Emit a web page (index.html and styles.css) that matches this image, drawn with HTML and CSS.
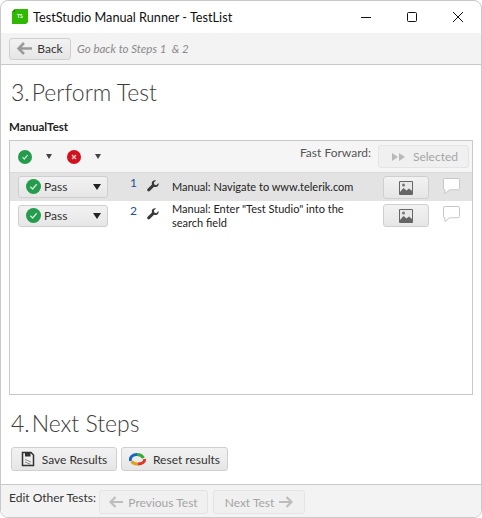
FILE: index.html
```html
<!DOCTYPE html>
<html>
  <head>
    <meta charset="utf-8">
    <title>TestStudio Manual Runner - TestList</title>
    <link rel="stylesheet" href="styles.css">
  </head>

  <body>
    <div class="window">
      <div class="titlebar">
        <svg class="logo" width="17" height="17" viewBox="0 0 17 17">
          <path d="M4 1H17V14L15 16H1V4Z" fill="#2fb900"/>
          <path d="M4 1V4H1Z" fill="#1c7a00"/>
          <text x="6" y="10" class="logo-text">TS</text>
        </svg>
        <span class="title">TestStudio Manual Runner - TestList</span>
        <div class="caption">
          <svg width="46" height="16" viewBox="0 0 46 16"><path d="M18 8.500H28" stroke="#111" fill="none"/></svg>
          <svg width="46" height="16" viewBox="0 0 46 16"><rect x="18.500" y="3.500" width="9" height="9" rx="1" stroke="#111" fill="none"/></svg>
          <svg width="46" height="16" viewBox="0 0 46 16"><path d="M18 3L28 13M28 3L18 13" stroke="#111" fill="none"/></svg>
        </div>
      </div>

      <div class="toolbar">
        <button class="btn back-btn">
          <svg width="15" height="13" viewBox="0 0 15 13"><path d="M7 1L1.500 6.500L7 12M2 6.500H15" stroke="#9a9a9a" stroke-width="2.500" fill="none"/></svg>
          Back
        </button>
        <span class="hint">Go back to Steps 1 &nbsp;&amp; 2</span>
      </div>

      <div class="content">
        <h1 class="step-title"><span class="step-num">3.</span>Perform Test</h1>
        <div class="test-name">ManualTest</div>

        <div class="panel">
          <div class="panel-bar">
            <svg class="status" width="14" height="14" viewBox="0 0 14 14"><circle cx="7" cy="7" r="7" fill="#259b4c"/><path d="M4.500 7.200L6.300 9L9.600 5.200" stroke="#cfe8d6" stroke-width="1.200" fill="none"/></svg>
            <span class="caret small first"></span>
            <svg class="status" width="14" height="14" viewBox="0 0 14 14"><circle cx="7" cy="7" r="7" fill="#d4101c"/><path d="M5 5L9 9M9 5L5 9" stroke="#f6d5d5" stroke-width="1.300"/></svg>
            <span class="caret small"></span>
            <span class="ff-label">Fast Forward:</span>
            <button class="btn selected-btn" disabled>
              <svg width="14" height="8" viewBox="0 0 14 8"><path d="M0 0L6 4L0 8ZM7 0L13 4L7 8Z" fill="#b9b9b9"/></svg>
              Selected
            </button>
          </div>

          <div class="step-row active">
            <button class="btn pass-select">
              <svg width="15" height="15" viewBox="0 0 14 14"><circle cx="7" cy="7" r="7" fill="#259b4c"/><path d="M4 7.200L6.200 9.300L10 4.900" stroke="#cfe8d6" stroke-width="1.300" fill="none"/></svg>
              <span class="pass-text">Pass</span>
              <span class="caret"></span>
            </button>
            <span class="step-num-cell">1</span>
            <svg class="wrench" width="12" height="12" viewBox="0 0 14 14"><path d="M13.500 3.500L10.800 6L8.500 5.300L8 3L10.500 .5C8.500 0 6.200 1 5.700 3C5.500 3.800 5.500 4.600 5.800 5.300L.8 10.300C0 11.100 0 12 .7 12.800C1.500 13.600 2.500 13.500 3.200 12.800L8.200 8C10.500 8.800 12.800 7.500 13.500 5.500Z" fill="#3a3a3a"/></svg>
            <span class="step-text">Manual: Navigate to www.telerik.com</span>
            <button class="btn image-btn">
              <svg width="14" height="14" viewBox="0 0 14 14"><path d="M.5 .5H13.500V13.500H.5Z" fill="#e8e8e8" stroke="#666"/><path d="M1 11L4.500 7L7.500 9.500L10 7.500L13 10V13H1Z" fill="#666"/><circle cx="4.500" cy="4" r="1.500" fill="#777"/></svg>
            </button>
            <svg class="comment" width="17" height="17" viewBox="0 0 18 18"><path d="M2 .5H16C17 .5 17.500 1 17.500 2V11C17.500 12 17 12.500 16 12.500H7L2 16.500V12.500C1 12.500 .5 12 .5 11V2C.5 1 1 .5 2 .5Z" fill="#fff" stroke="#c4c4c4"/></svg>
          </div>

          <div class="step-row second">
            <button class="btn pass-select">
              <svg width="15" height="15" viewBox="0 0 14 14"><circle cx="7" cy="7" r="7" fill="#259b4c"/><path d="M4 7.200L6.200 9.300L10 4.900" stroke="#cfe8d6" stroke-width="1.300" fill="none"/></svg>
              <span class="pass-text">Pass</span>
              <span class="caret"></span>
            </button>
            <span class="step-num-cell">2</span>
            <svg class="wrench" width="12" height="12" viewBox="0 0 14 14"><path d="M13.500 3.500L10.800 6L8.500 5.300L8 3L10.500 .5C8.500 0 6.200 1 5.700 3C5.500 3.800 5.500 4.600 5.800 5.300L.8 10.300C0 11.100 0 12 .7 12.800C1.500 13.600 2.500 13.500 3.200 12.800L8.200 8C10.500 8.800 12.800 7.500 13.500 5.500Z" fill="#3a3a3a"/></svg>
            <span class="step-text">Manual: Enter "Test Studio" into the search field</span>
            <button class="btn image-btn">
              <svg width="14" height="14" viewBox="0 0 14 14"><path d="M.5 .5H13.500V13.500H.5Z" fill="#e8e8e8" stroke="#666"/><path d="M1 11L4.500 7L7.500 9.500L10 7.500L13 10V13H1Z" fill="#666"/><circle cx="4.500" cy="4" r="1.500" fill="#777"/></svg>
            </button>
            <svg class="comment" width="17" height="17" viewBox="0 0 18 18"><path d="M2 .5H16C17 .5 17.500 1 17.500 2V11C17.500 12 17 12.500 16 12.500H7L2 16.500V12.500C1 12.500 .5 12 .5 11V2C.5 1 1 .5 2 .5Z" fill="#fff" stroke="#c4c4c4"/></svg>
          </div>
        </div>

        <h1 class="step-title next"><span class="step-num">4.</span>Next Steps</h1>
        <div class="actions">
          <button class="btn action-btn save">
            <svg width="14" height="16" viewBox="0 0 14 16"><path d="M1.500 1.500H10L12.500 4V14.500H1.500Z" fill="#eee" stroke="#333" stroke-width="1.500"/><path d="M4 1.500H9.500V5.500H4Z" fill="#333"/><path d="M4 8.500L10 11M4 11L10 13.500" stroke="#888"/></svg>
            Save Results
          </button>
          <button class="btn action-btn reset">
            <svg width="17" height="15" viewBox="0 0 17 15">
              <path d="M1.500 9C.5 5 4 2.500 8 2.500" stroke="#1565c8" stroke-width="3" fill="none"/>
              <path d="M8 2.500C11 2.500 13 3.500 14.500 6" stroke="#3aa935" stroke-width="3" fill="none"/>
              <path d="M15.500 7C16 10 13 12 9 12" stroke="#d9382b" stroke-width="3" fill="none"/>
              <path d="M9 12C6 12 4 11.500 2.500 9.500" stroke="#e0a020" stroke-width="3" fill="none"/>
            </svg>
            Reset results
          </button>
        </div>
      </div>

      <div class="footer">
        <span class="footer-label">Edit Other Tests:</span>
        <button class="btn nav-btn prev" disabled>
          <svg width="14" height="12" viewBox="0 0 14 12"><path d="M6.500 1L1.500 6L6.500 11M2 6H14" stroke="#bdbdbd" stroke-width="2.200" fill="none"/></svg>
          Previous Test
        </button>
        <button class="btn nav-btn next-test" disabled>
          Next Test
          <svg width="14" height="12" viewBox="0 0 14 12"><path d="M7.500 1L12.500 6L7.500 11M12 6H0" stroke="#bdbdbd" stroke-width="2.200" fill="none"/></svg>
        </button>
      </div>
    </div>
  </body>
</html>
```

FILE: styles.css
```css
html,
body {
  margin: 0;
  height: 100%;
  background-color: #fff;
}

body {
  font-family: Lato, "Open Sans", sans-serif;
  font-size: 12px;
  color: #222;
}

.window {
  display: flex;
  flex-direction: column;
  box-sizing: border-box;
  width: 482px;
  height: 518px;
  background-color: #fff;
  border: 1px solid #c9c9c9;
  border-radius: 8px;
  overflow: hidden;
}

.titlebar {
  display: flex;
  align-items: center;
  height: 32px;
  padding-left: 10px;
}

.logo {
  margin-top: -2px;
}

.logo-text {
  font-size: 5px;
  font-weight: 700;
  fill: #fff;
}

.title {
  margin-left: 5px;
  font-size: 12.700px;
  color: #111;
}

.caption {
  display: flex;
  margin-left: auto;
}

.toolbar {
  display: flex;
  align-items: center;
  gap: 6px;
  height: 31px;
  padding-left: 8px;
  background-color: #f3f3f3;
  border-bottom: 1px solid #c9c9c9;
}

.btn {
  display: flex;
  align-items: center;
  justify-content: center;
  gap: 5px;
  box-sizing: border-box;
  padding: 0;
  font-family: inherit;
  font-size: 12px;
  color: #333;
  background: linear-gradient(to bottom, #f2f2f2, #e6e6e6);
  border: 1px solid #cfcfcf;
  border-radius: 3px;
}

.btn:disabled {
  color: #a5a5a5;
  background: #f0f0f0;
  border-color: #e4e4e4;
}

.back-btn {
  width: 62px;
  height: 22px;
}

.hint {
  font-size: 11.500px;
  font-style: italic;
  color: #8a8a8a;
}

.content {
  flex: 1;
  padding: 0 8px;
}

.step-title {
  display: flex;
  margin: 10px 0 0 2px;
  font-size: 23px;
  line-height: 34px;
  font-weight: 300;
  color: #3c3c3c;
}

.step-num {
  margin-right: 2px;
}

.test-name {
  margin-top: 9px;
  height: 18px;
  line-height: 18px;
  font-size: 11.500px;
  font-weight: 700;
}

.panel {
  box-sizing: border-box;
  height: 255px;
  margin-top: 4px;
  border: 1px solid #c9c9c9;
}

.panel-bar {
  display: flex;
  align-items: center;
  height: 31px;
  padding: 0 3px 0 8px;
  background-color: #f5f5f5;
  border-bottom: 1px solid #d8d8d8;
}

.caret {
  width: 0;
  height: 0;
  margin-left: auto;
  margin-right: 6px;
  border-left: 4.500px solid transparent;
  border-right: 4.500px solid transparent;
  border-top: 6px solid #222;
}

.caret.small {
  margin: 0 0 0 14px;
  border-left-width: 3.500px;
  border-right-width: 3.500px;
  border-top-width: 5px;
  border-top-color: #444;
}

.caret.first {
  margin-right: 15px;
}

.ff-label {
  margin: -8px 7px 0 auto;
  color: #555;
}

.selected-btn {
  width: 91px;
  height: 23px;
  gap: 7px;
  padding-left: 3px;
}

.step-row {
  display: flex;
  align-items: flex-start;
  height: 28px;
  padding-top: 3px;
  box-sizing: border-box;
}

.step-row.active {
  background-color: #e3e3e3;
}

.pass-select {
  justify-content: flex-start;
  flex-shrink: 0;
  width: 90px;
  height: 22px;
  margin-left: 8px;
  padding: 0 0 1px 7px;
  gap: 3px;
}

.second .pass-select {
  margin-top: 1px;
}

.step-num-cell {
  width: 8px;
  margin-left: 22px;
  font-size: 12px;
  line-height: 14px;
  color: #1b4f93;
}

.wrench {
  flex-shrink: 0;
  margin: 4px 0 0 9px;
}

.step-text {
  box-sizing: border-box;
  width: 211px;
  margin-left: 13px;
  padding-top: 4px;
  font-size: 11px;
  line-height: 14px;
  color: #222;
}

.second .step-text {
  padding: 0 30px 0 0;
  margin-top: -2px;
}

.image-btn {
  width: 46px;
  height: 23px;
  flex-shrink: 0;
}

.comment {
  flex-shrink: 0;
  margin: 2px 0 0 14px;
}

.step-title.next {
  margin-top: 11px;
}

.actions {
  display: flex;
  gap: 4px;
  margin: 7px 0 0 2px;
}

.action-btn {
  height: 24px;
  gap: 7px;
}

.save {
  width: 106px;
}

.reset {
  width: 107px;
}

.footer {
  display: flex;
  align-items: flex-start;
  height: 33px;
  box-sizing: border-box;
  padding: 5px 0 0 8px;
  background-color: #f3f3f3;
  border-top: 1px solid #c9c9c9;
}

.footer-label {
  width: 90px;
  flex-shrink: 0;
  color: #333;
}

.nav-btn {
  height: 24px;
}

.prev {
  width: 109px;
}

.next-test {
  width: 92px;
  margin-left: 5px;
}
```
